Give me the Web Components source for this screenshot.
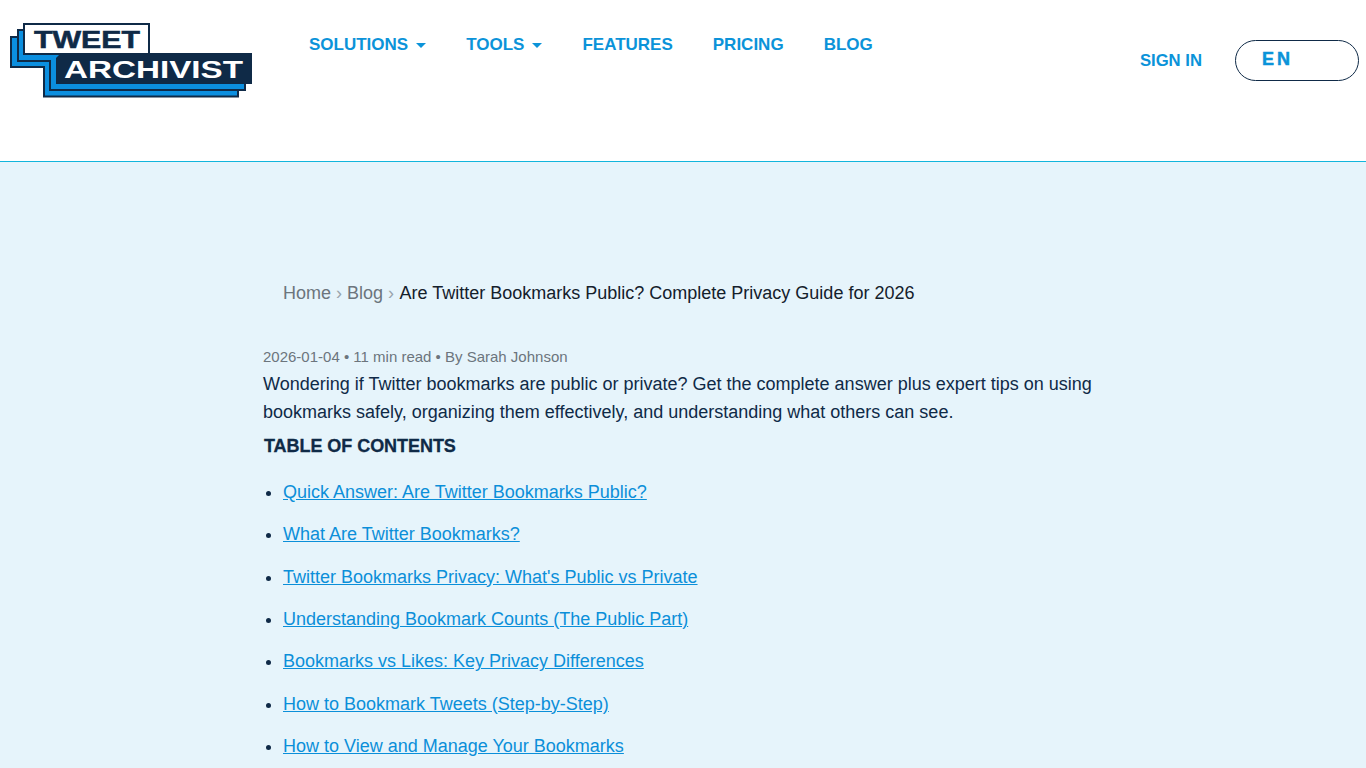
<!DOCTYPE html>
<html lang="en">
<head>
<meta charset="utf-8">
<title>Are Twitter Bookmarks Public? Complete Privacy Guide for 2026</title>
<style>
    html, body { margin: 0; height: 768px; overflow: hidden; }
    body { background: #e6f4fb; color: #0f2a47; font-family: "Liberation Sans", Arial, sans-serif; font-size: 18px; }
</style>
</head>
<body>
<site-header>
    <site-logo slot="logo"></site-logo>
    <nav-link slot="nav" caret>SOLUTIONS</nav-link>
    <nav-link slot="nav" caret>TOOLS</nav-link>
    <nav-link slot="nav">FEATURES</nav-link>
    <nav-link slot="nav">PRICING</nav-link>
    <nav-link slot="nav">BLOG</nav-link>
    <nav-link slot="actions">SIGN IN</nav-link>
    <lang-button slot="actions">EN</lang-button>
</site-header>
<article-page>
    <bread-crumbs>
        <a href="#">Home</a>
        <a href="#">Blog</a>
        <span>Are Twitter Bookmarks Public? Complete Privacy Guide for 2026</span>
    </bread-crumbs>
    <article-intro meta="2026-01-04 • 11 min read • By Sarah Johnson">Wondering if Twitter bookmarks are public or private? Get the complete answer plus expert tips on using bookmarks safely, organizing them effectively, and understanding what others can see.</article-intro>
    <toc-list title="TABLE OF CONTENTS">
        <toc-item>Quick Answer: Are Twitter Bookmarks Public?</toc-item>
        <toc-item>What Are Twitter Bookmarks?</toc-item>
        <toc-item>Twitter Bookmarks Privacy: What's Public vs Private</toc-item>
        <toc-item>Understanding Bookmark Counts (The Public Part)</toc-item>
        <toc-item>Bookmarks vs Likes: Key Privacy Differences</toc-item>
        <toc-item>How to Bookmark Tweets (Step-by-Step)</toc-item>
        <toc-item>How to View and Manage Your Bookmarks</toc-item>
    </toc-list>
</article-page>
<script>
class SiteHeader extends HTMLElement {
    constructor() {
        super();
        this.attachShadow({ mode: 'open' });
        this.shadowRoot.innerHTML = `
            <style>
                :host {
                    display: flex;
                    height: 161px;
                    background: #fff;
                    border-bottom: 1px solid #12b5dc;
                }
                .logo { flex: none; padding: 23px 0 0 10px; }
                nav { flex: 1; display: flex; gap: 40px; padding: 35px 0 0 56px; align-items: flex-start; }
                .actions { flex: none; display: flex; align-items: center; gap: 33px; height: 41px; padding: 40px 7px 0 0; }
                .actions ::slotted(nav-link) { font-size: 16.7px; }
            </style>
            <div class="logo"><slot name="logo"></slot></div>
            <nav><slot name="nav"></slot></nav>
            <div class="actions"><slot name="actions"></slot></div>
        `;
    }
}

class SiteLogo extends HTMLElement {
    constructor() {
        super();
        this.attachShadow({ mode: 'open' });
        // drawn in page px, shifted by the viewBox so the numbers read like the screenshot
        this.shadowRoot.innerHTML = `
            <style>
                :host { display: block; width: 243px; height: 75px; }
                svg { display: block; }
                text { font-family: "Liberation Sans", Arial, sans-serif; font-weight: 700; }
            </style>
            <svg width="243" height="75" viewBox="10 23 243 75">
                <polygon points="11,37 136,37 136,67 238,67 238,96.5 44,96.5 44,67 11,67" fill="#0b8fe0" stroke="#0f2a47" stroke-width="2"/>
                <polygon points="18,30 142,30 142,60 245,60 245,90 50,90 50,61 18,61" fill="#0b8fe0" stroke="#0f2a47" stroke-width="2"/>
                <rect x="24" y="24" width="125" height="30" fill="#fff" stroke="#0f2a47" stroke-width="2"/>
                <polygon points="61,53 252,53 252,84 56,84 56,58" fill="#0f2a47"/>
                <text x="34" y="47.5" font-size="23" textLength="106" lengthAdjust="spacingAndGlyphs" fill="#0f2a47" stroke="#0f2a47" stroke-width=".5">TWEET</text>
                <text x="64" y="77.5" font-size="23" textLength="179" lengthAdjust="spacingAndGlyphs" fill="#fff">ARCHIVIST</text>
            </svg>
        `;
    }
}

class NavLink extends HTMLElement {
    constructor() {
        super();
        this.attachShadow({ mode: 'open' });
        this.shadowRoot.innerHTML = `
            <style>
                :host { display: inline-flex; align-items: center; gap: 8px; height: 20px; color: #0b93d9; font-size: 17px; font-weight: 700; line-height: 20px; cursor: pointer; }
                i { display: none; width: 0; height: 0; border: 5px solid transparent; border-top-color: #0b93d9; border-bottom: 0; }
                :host([caret]) i { display: block; }
            </style>
            <slot></slot><i></i>
        `;
    }
}

class LangButton extends HTMLElement {
    constructor() {
        super();
        this.attachShadow({ mode: 'open' });
        this.shadowRoot.innerHTML = `
            <style>
                :host { display: block; box-sizing: border-box; width: 124px; height: 41px; padding-left: 26px; border: 1px solid #0f2a47; border-radius: 21px; background: #fff; color: #0b93d9; font-size: 18px; font-weight: 700; letter-spacing: 3px; line-height: 37px; -webkit-text-stroke: .5px #0b93d9; }
            </style>
            <slot></slot>
        `;
    }
}

class ArticlePage extends HTMLElement {
    constructor() {
        super();
        this.attachShadow({ mode: 'open' });
        this.shadowRoot.innerHTML = `
            <style>
                :host { display: block; padding: 120px 263px 0; }
            </style>
            <slot></slot>
        `;
    }
}

class BreadCrumbs extends HTMLElement {
    constructor() {
        super();
        this.attachShadow({ mode: 'open' });
        this.shadowRoot.innerHTML = `
            <style>
                :host { display: block; padding-left: 20px; line-height: 22px; color: #14202b; white-space: nowrap; }
                ::slotted(a) { color: #6c757d; text-decoration: none; }
                ::slotted(a)::after { content: " › "; color: #9aa5ad; }
                ::slotted(span) { margin-left: .5px; }
            </style>
            <slot></slot>
        `;
    }
}

class ArticleIntro extends HTMLElement {
    constructor() {
        super();
        this.attachShadow({ mode: 'open' });
        this.shadowRoot.innerHTML = `
            <style>
                :host { display: block; padding-top: 41px; }
                .meta { margin-bottom: 1px; color: #6c757d; font-size: 15px; line-height: 24px; }
                p { margin: 0; line-height: 28px; color: #0f2a47; width: 840px; }
            </style>
            <div class="meta"></div>
            <p><slot></slot></p>
        `;
    }

    connectedCallback() {
        this.shadowRoot.querySelector('.meta').textContent = this.getAttribute('meta');
    }
}

class TocList extends HTMLElement {
    constructor() {
        super();
        this.attachShadow({ mode: 'open' });
        this.shadowRoot.innerHTML = `
            <style>
                :host { display: block; padding-top: 8px; }
                h2 { margin: 0 0 20px 1px; color: #0f2a47; font-size: 18px; font-weight: 700; line-height: 24px; letter-spacing: -.05px; -webkit-text-stroke: .3px #0f2a47; }
                ul { display: grid; gap: 14.33px; margin: 0; padding: 0 0 0 20px; line-height: 28px; }
            </style>
            <h2></h2>
            <ul><slot></slot></ul>
        `;
    }

    connectedCallback() {
        this.shadowRoot.querySelector('h2').textContent = this.getAttribute('title');
    }
}

class TocItem extends HTMLElement {
    constructor() {
        super();
        this.attachShadow({ mode: 'open' });
        this.shadowRoot.innerHTML = `
            <style>
                :host { display: list-item; color: #0f2a47; }
                a { color: #0b8fd9; text-decoration: underline; }
            </style>
            <a href="#"><slot></slot></a>
        `;
    }
}

customElements.define('site-header', SiteHeader);
customElements.define('site-logo', SiteLogo);
customElements.define('nav-link', NavLink);
customElements.define('lang-button', LangButton);
customElements.define('article-page', ArticlePage);
customElements.define('bread-crumbs', BreadCrumbs);
customElements.define('article-intro', ArticleIntro);
customElements.define('toc-list', TocList);
customElements.define('toc-item', TocItem);
</script>
</body>
</html>
